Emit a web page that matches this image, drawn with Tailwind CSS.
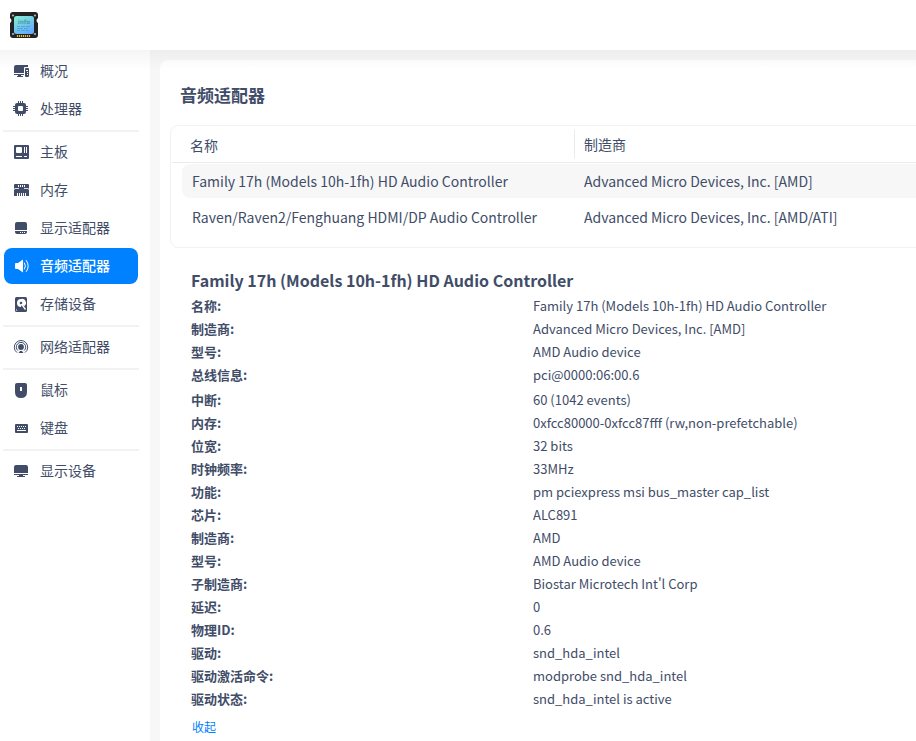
<!DOCTYPE html>
<html lang="zh-CN">
<head>
    <meta charset="UTF-8">
    <meta name="viewport" content="width=device-width, initial-scale=1.0">
    <title>音频适配器</title>
    <script src="https://cdn.jsdelivr.net/npm/@tailwindcss/browser@4"></script>
</head>
<body class="h-screen overflow-hidden flex flex-col bg-white text-[#414d68] font-['Noto_Sans_CJK_SC',sans-serif]">
    <!-- Title bar -->
    <header class="h-[50px] shrink-0 flex items-center pl-[9px] bg-white">
        <svg class="w-[30px] h-[30px]" viewBox="0 0 30 30">
            <defs>
                <linearGradient id="screen" x1="0" y1="0" x2="0.6" y2="1">
                    <stop offset="0" stop-color="#86f0d2" />
                    <stop offset="1" stop-color="#62aefc" />
                </linearGradient>
            </defs>
            <path d="M4 2h22q3 0 3 3v3q-1.500 1-1.500 2.500T29 13v12q0 3-3 3H4q-3 0-3-3V13q1.500-1 1.500-2.500T1 8V5q0-3 3-3z" fill="#222224" />
            <g fill="#b5b5b5">
                <circle cx="4" cy="5.500" r="1.100" />
                <circle cx="26" cy="5.500" r="1.100" />
                <circle cx="4" cy="24" r="1.100" />
                <circle cx="26" cy="24" r="1.100" />
            </g>
            <rect x="5" y="6" width="20" height="18" rx="2.500" fill="url(#screen)" />
            <text x="15" y="14" text-anchor="middle" font-family="DejaVu Sans" font-weight="bold" font-size="6" textLength="12.5" lengthAdjust="spacingAndGlyphs" fill="#4f9ea6">info</text>
            <path d="M8 16.500h3m1 0h4m1 0h4M8 18.500h6m1 0h4M8 20.500h3m1 0h4m1 0h3" stroke="#4a94d0" stroke-width="0.700" />
            <path d="M8.500 25v2m2-2v2m2-2v2m2-2v2m2-2v2m2-2v2m2-2v2" stroke="#e8b93c" stroke-width="1.200" />
        </svg>
    </header>

    <div class="relative flex flex-1 min-h-0">
        <!-- Sidebar -->
        <nav class="w-[150px] shrink-0 pt-[3px] text-sm leading-9 [&_span]:pb-0.5">
            <ul class="px-1 pr-3 flex flex-col gap-0.5">
                <li class="h-9 flex items-center gap-[11px] pl-[9px]">
                    <svg class="w-4 h-4 shrink-0" viewBox="0 0 16 16" fill="currentColor">
                        <path d="M3 2h12v2h-3q-1 0-1 1v5H1V4q0-2 2-2zM1 11h10v1H8v1h2v1H4v-1h1v-1H1z" />
                        <path d="M13 5h2q1 0 1 1v7q0 1-1 1h-2q-1 0-1-1V6q0-1 1-1zm0 2v1h2V7zm1 2v1h1V9zm0 2v1h1v-1z" fill-rule="evenodd" />
                    </svg>
                    <span>概况</span>
                </li>
                <li class="h-9 flex items-center gap-[11px] pl-[9px]">
                    <svg class="w-4 h-4 shrink-0" viewBox="0 0 16 16" fill="currentColor">
                        <path d="M4 2h7q2 0 2 2v7q0 2-2 2H4q-2 0-2-2V4q0-2 2-2zm2 3q-1 0-1 1v3q0 1 1 1h3q1 0 1-1V6q0-1-1-1z" fill-rule="evenodd" />
                        <path d="M5.500 0v3m2-3v3m2-3v3m-4 9v3m2-3v3m2-3v3M0 5.500h3m-3 2h3m-3 2h3M12 5.500h3m-3 2h3m-3 2h3" stroke="currentColor" stroke-width="1" />
                    </svg>
                    <span>处理器</span>
                </li>
            </ul>
            <div class="h-0.5 mt-[3px] mb-0.5 ml-[3px] w-[136px] bg-[#f2f2f2]"></div>
            <ul class="px-1 pr-3 flex flex-col gap-0.5">
                <li class="h-9 flex items-center gap-[11px] pl-[9px]">
                    <svg class="w-4 h-4 shrink-0" viewBox="0 0 16 16" fill="currentColor">
                        <path d="M2 1h13q1 0 1 1v12q0 1-1 1H2q-1 0-1-1V2q0-1 1-1zm2 2q-1 0-1 1v4q0 1 1 1h4q1 0 1-1V4q0-1-1-1zm7 0v6h1V3zm2 0v6h1V3zM3 12v1h6v-1zm8 0v1h3v-1z" fill-rule="evenodd" />
                    </svg>
                    <span>主板</span>
                </li>
                <li class="h-9 flex items-center gap-[11px] pl-[9px]">
                    <svg class="w-4 h-4 shrink-0" viewBox="0 0 16 16" fill="currentColor">
                        <path d="M2 2h13q1 0 1 1v3l-1 1 1 1v6H1V8l1-1-1-1V3q0-1 1-1z" />
                        <path d="M5.500 3v2m2-2v2m2-2v2m2-2v2M4.500 11v3m2-3v3m2-3v3m2-3v3m2-3v3" stroke="#fff" stroke-width="1" />
                        <path d="M2 6.500h4M11 6.500h4" stroke="#fff" stroke-width=".800" />
                    </svg>
                    <span>内存</span>
                </li>
                <li class="h-9 flex items-center gap-[11px] pl-[9px]">
                    <svg class="w-4 h-4 shrink-0" viewBox="0 0 16 16" fill="currentColor">
                        <path d="M4 2h8q2 0 2 2v6H2V4q0-2 2-2z" />
                        <path d="M2 11h12v1q0 2-2 2H4q-2 0-2-2zm5 1v1h1v-1zm2 0v1h1v-1zm2 0v1h1v-1z" fill-rule="evenodd" />
                    </svg>
                    <span>显示适配器</span>
                </li>
                <li class="h-9 flex items-center gap-[11px] pl-[9px] rounded-lg bg-[#0081ff] text-white font-medium">
                    <svg class="w-4 h-4 shrink-0" viewBox="0 0 16 16" fill="currentColor">
                        <path d="M3 5h2l5-3.500v13L5 11H3q-1 0-1-1V6q0-1 1-1z" />
                        <path d="M11.500 5q2 3 0 6M13.300 2.500q4 5.500 0 11" fill="none" stroke="currentColor" stroke-width="1" stroke-linecap="round" />
                    </svg>
                    <span>音频适配器</span>
                </li>
                <li class="h-9 flex items-center gap-[11px] pl-[9px]">
                    <svg class="w-4 h-4 shrink-0" viewBox="0 0 16 16" fill="currentColor">
                        <rect x="2" y="1" width="12" height="15" rx="1.500" />
                        <path d="M8 3a4 4 0 1 0 0 8l.500-2 3 1A4 4 0 0 0 8 3zM3 13v1.500h1.500z" fill="#fff" />
                        <circle cx="8" cy="7" r="1.300" />
                        <path d="M8.500 8l4 5.500" stroke="#fff" stroke-width="1.300" />
                    </svg>
                    <span>存储设备</span>
                </li>
            </ul>
            <div class="h-0.5 mt-[3px] mb-0.5 ml-[3px] w-[136px] bg-[#f2f2f2]"></div>
            <ul class="px-1 pr-3 flex flex-col gap-0.5">
                <li class="h-9 flex items-center gap-[11px] pl-[9px]">
                    <svg class="w-4 h-4 shrink-0" viewBox="0 0 16 16" fill="none" stroke="currentColor">
                        <circle cx="8" cy="8" r="2.900" fill="currentColor" stroke="none" />
                        <path d="M4.900 11.600a4.700 4.700 0 1 1 6.200 0" />
                        <path d="M4 13.600a6.700 6.700 0 1 1 8 0" />
                        <path d="M7 12h2l1.500 2h-5z" fill="currentColor" stroke="none" />
                    </svg>
                    <span>网络适配器</span>
                </li>
            </ul>
            <div class="h-0.5 mt-[3px] mb-0.5 ml-[3px] w-[136px] bg-[#f2f2f2]"></div>
            <ul class="px-1 pr-3 flex flex-col gap-0.5">
                <li class="h-9 flex items-center gap-[11px] pl-[9px]">
                    <svg class="w-4 h-4 shrink-0" viewBox="0 0 16 16" fill="currentColor">
                        <path d="M4 1h8q2 0 2 2v7q0 6-6 6t-6-6V3q0-2 2-2zm3 4v4h2V5z" fill-rule="evenodd" />
                    </svg>
                    <span>鼠标</span>
                </li>
                <li class="h-9 flex items-center gap-[11px] pl-[9px]">
                    <svg class="w-4 h-4 shrink-0" viewBox="0 0 16 16" fill="currentColor">
                        <rect x="2" y="4" width="13" height="9" rx="1" />
                        <path d="M4 6.500h9M5 8.500h8" stroke="#fff" stroke-dasharray="1 1" />
                        <path d="M4 10.500h9" stroke="#fff" />
                    </svg>
                    <span>键盘</span>
                </li>
            </ul>
            <div class="h-0.5 mt-[3px] mb-0.5 ml-[3px] w-[136px] bg-[#f2f2f2]"></div>
            <ul class="px-1 pr-3 flex flex-col gap-0.5">
                <li class="h-9 flex items-center gap-[11px] pl-[9px]">
                    <svg class="w-4 h-4 shrink-0" viewBox="0 0 16 16" fill="currentColor">
                        <path d="M3 2h10q2 0 2 2v6H1V4q0-2 2-2zM1 11h14v1h-5v1h2v1H4v-1h2v-1H1z" />
                    </svg>
                    <span>显示设备</span>
                </li>
            </ul>
        </nav>

        <!-- Content -->
        <main class="flex-1 min-w-0 pl-2.5 pt-2.5 bg-[#f7f7f7]">
            <div class="h-full rounded-tl-lg bg-white pl-2.5 flex flex-col">
                <h1 class="mt-[19px] ml-2.5 h-8 leading-8 text-[17px] font-bold">音频适配器</h1>

                <section class="mt-3.5 h-[123px] shrink-0 -mr-3 rounded-lg border border-[#f2f2f2] text-sm">
                    <div class="h-[37px] mx-px flex items-center border-b border-[#ebebeb]">
                        <div class="w-[402px] pl-[18px] pt-0.5">名称</div>
                        <div class="h-7 leading-[29px] pl-[9px] border-l border-[#ebebeb]">制造商</div>
                    </div>
                    <div class="mt-px ml-[11px] h-[34px] flex items-center rounded-l-lg bg-[#f7f7f7]">
                        <div class="w-[392px] pl-2.5">Family 17h (Models 10h-1fh) HD Audio Controller</div>
                        <div class="pl-2.5">Advanced Micro Devices, Inc. [AMD]</div>
                    </div>
                    <div class="mt-0.5 ml-[11px] h-[34px] flex items-center">
                        <div class="w-[392px] pl-2.5">Raven/Raven2/Fenghuang HDMI/DP Audio Controller</div>
                        <div class="pl-2.5">Advanced Micro Devices, Inc. [AMD/ATI]</div>
                    </div>
                </section>

                <section class="mt-[19px] ml-[21px] text-[13px]">
                    <h2 class="h-[27px] leading-[27px] text-base font-bold">Family 17h (Models 10h-1fh) HD Audio Controller</h2>
                    <dl class="grid grid-cols-[342px_1fr] auto-rows-[23px] leading-[23px] [&_dt]:font-bold">
                        <dt>名称:</dt><dd>Family 17h (Models 10h-1fh) HD Audio Controller</dd>
                        <dt>制造商:</dt><dd>Advanced Micro Devices, Inc. [AMD]</dd>
                        <dt>型号:</dt><dd>AMD Audio device</dd>
                        <dt>总线信息:</dt><dd>pci@0000:06:00.6</dd>
                    </dl>
                    <dl class="mt-0.5 grid grid-cols-[342px_1fr] auto-rows-[23px] leading-[23px] [&_dt]:font-bold">
                        <dt>中断:</dt><dd>60 (1042 events)</dd>
                        <dt>内存:</dt><dd>0xfcc80000-0xfcc87fff (rw,non-prefetchable)</dd>
                        <dt>位宽:</dt><dd>32 bits</dd>
                        <dt>时钟频率:</dt><dd>33MHz</dd>
                        <dt>功能:</dt><dd>pm pciexpress msi bus_master cap_list</dd>
                        <dt>芯片:</dt><dd>ALC891</dd>
                        <dt>制造商:</dt><dd>AMD</dd>
                        <dt>型号:</dt><dd>AMD Audio device</dd>
                        <dt>子制造商:</dt><dd>Biostar Microtech Int'l Corp</dd>
                        <dt>延迟:</dt><dd>0</dd>
                        <dt>物理ID:</dt><dd>0.6</dd>
                        <dt>驱动:</dt><dd>snd_hda_intel</dd>
                        <dt>驱动激活命令:</dt><dd>modprobe snd_hda_intel</dd>
                        <dt>驱动状态:</dt><dd>snd_hda_intel is active</dd>
                    </dl>
                    <a href="#" class="block mt-[7px] ml-px text-xs leading-5 text-[#0081ff]">收起</a>
                </section>
            </div>
        </main>

        <!-- Title bar shadow -->
        <div class="absolute inset-x-0 top-0 h-5 pointer-events-none bg-linear-to-b from-black/4 to-transparent"></div>
    </div>
</body>
</html>
